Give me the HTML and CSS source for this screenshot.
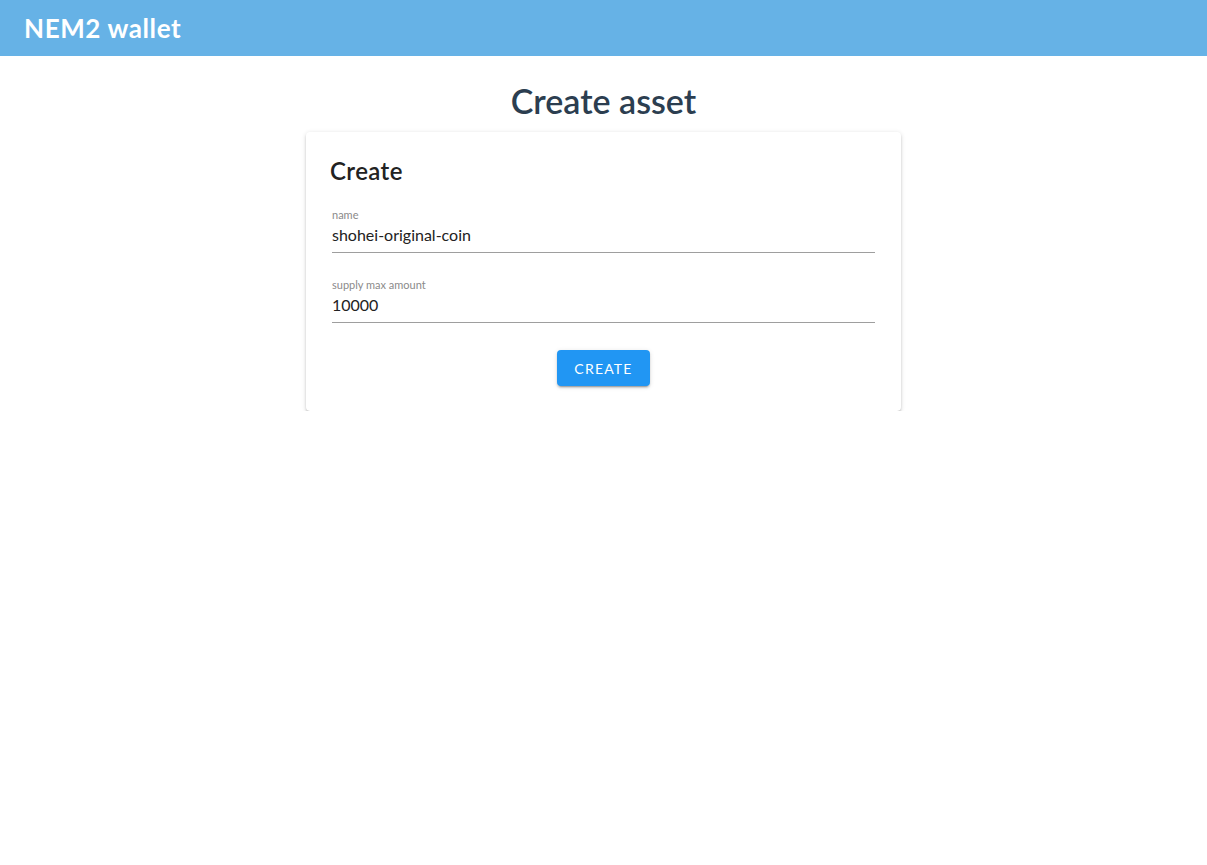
FILE: index.html
```html
<!DOCTYPE html>
<html>
<head>
<meta charset="utf-8">
<link rel="stylesheet" href="styles.css">
</head>
<body>
<header class="toolbar"><div class="brand">NEM2 wallet</div></header>
<main class="main">
  <h1 class="page-title">Create asset</h1>
  <section class="card">
    <h2 class="card-title">Create</h2>
    <div class="form">
      <div class="field">
        <label class="field-label">name</label>
        <div class="field-value">shohei-original-coin</div>
      </div>
      <div class="field">
        <label class="field-label">supply max amount</label>
        <div class="field-value">10000</div>
      </div>
      <div class="actions"><button class="btn">CREATE</button></div>
    </div>
  </section>
</main>
</body>
</html>
```
FILE: styles.css
```css
* { box-sizing: border-box; }
html, body { margin: 0; padding: 0; background: #fff; }
body { font-family: Lato, "Noto Sans", sans-serif; color: #222; }
.toolbar {
  height: 56px;
  background: #66b2e6;
  display: flex;
  align-items: center;
  padding: 0 24px;
}
.brand { color: #fff; font-size: 26px; font-weight: 700; letter-spacing: 0.6px; }
.main { display: flex; flex-direction: column; align-items: center; }
.page-title {
  margin: 24px 0 0;
  font-size: 34px;
  font-weight: 600;
  color: #2c3e50;
  line-height: 42px;
  height: 52px;
}
.card {
  width: 595px;
  background: #fff;
  border-radius: 4px;
  box-shadow: 0 3px 1px -2px rgba(0,0,0,.22), 0 2px 2px 0 rgba(0,0,0,.16), 0 1px 5px 0 rgba(0,0,0,.14);
  padding: 24px 26px 25px 24px;
}
.card-title { margin: 0 0 22px; font-size: 24px; font-weight: 600; line-height: 30px; color: #222; letter-spacing: 0.4px; }
.form { padding-left: 2px; }
.field { border-bottom: 1px solid #9e9e9e; margin-bottom: 25px; }
.field-label { display: block; font-size: 11px; color: #8a8a8a; line-height: 14px; }
.field-value { font-size: 16px; color: #222; line-height: 26px; padding-bottom: 4px; }
.actions { display: flex; justify-content: center; margin-top: 27px; }
.btn {
  width: 93px; height: 36px;
  background: #2196f3; color: #fff;
  border: none; border-radius: 4px;
  font-family: inherit; font-size: 14px; letter-spacing: 1.2px;
  box-shadow: 0 3px 1px -2px rgba(0,0,0,.2), 0 2px 2px 0 rgba(0,0,0,.14), 0 1px 5px 0 rgba(0,0,0,.12);
}
```
